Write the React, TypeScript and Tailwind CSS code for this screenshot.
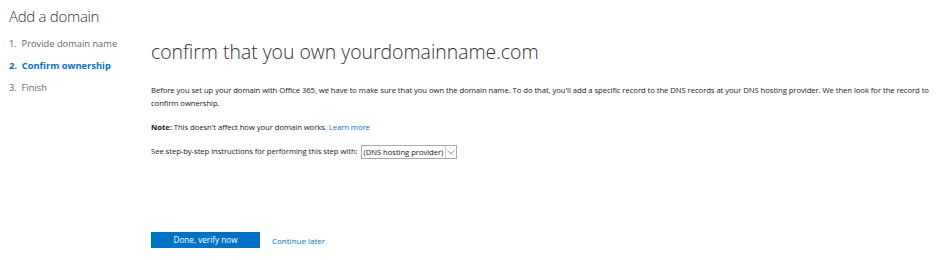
export default function App() {
  return (
    <div className="w-[940px] h-[260px] bg-white text-[#333] overflow-hidden" style={{ fontFamily: '"Open Sans", "Noto Sans", sans-serif' }}>
      <div className="flex">
        <div className="w-[151px] shrink-0 pl-[9px] pt-[5px]">
          <h1 className="text-[15px] font-light leading-[22px] tracking-[-0.3px] text-[#333]">Add a domain</h1>
          <ol className="mt-[6px] text-[9.3px] leading-[22px] text-[#666]">
            <li>1.&nbsp; Provide domain name</li>
            <li className="font-bold text-[#0072c6]">2.&nbsp; Confirm ownership</li>
            <li>3.&nbsp; Finish</li>
          </ol>
        </div>
        <div className="pt-[38px] w-[786px]">
          <h2 className="text-[19.4px] font-light leading-[28px] text-[#333]">confirm that you own yourdomainname.com</h2>
          <p className="mt-[18px] text-[7.7px] leading-[13px] tracking-[-0.06px] text-[#222]">
            Before you set up your domain with Office 365, we have to make sure that you own the domain name. To do that, you'll add a specific record to the DNS records at your DNS hosting provider. We then look for the record to confirm ownership.
          </p>
          <p className="mt-[11px] text-[7.7px] leading-[13px] tracking-[-0.06px] text-[#222]">
            <span className="font-bold">Note:</span> This doesn't affect how your domain works.{" "}
            <a className="text-[#0072c6]">Learn more</a>
          </p>
          <div className="mt-[11px] flex items-center gap-[3px] text-[7.7px] tracking-[-0.06px] text-[#222]">
            <span>See step-by-step instructions for performing this step with:</span>
            <div className="flex items-center h-[14px] border border-[#aaa]">
              <span className="px-[2px] leading-[12px]">(DNS hosting provider)</span>
              <span className="w-[11px] h-full border-l border-[#ccc] flex items-center justify-center">
                <svg width="8" height="5" viewBox="0 0 8 5"><path d="M0.5 0.5 L4 4 L7.5 0.5" fill="none" stroke="#888" strokeWidth="0.9" /></svg>
              </span>
            </div>
          </div>
          <div className="mt-[73px] flex items-center gap-[12px]">
            <button className="w-[109px] h-[16px] bg-[#0072c6] text-white text-[8.2px] leading-[16px]">Done, verify now</button>
            <a className="text-[8px] text-[#0072c6] mt-[2px]">Continue later</a>
          </div>
        </div>
      </div>
    </div>
  );
}
